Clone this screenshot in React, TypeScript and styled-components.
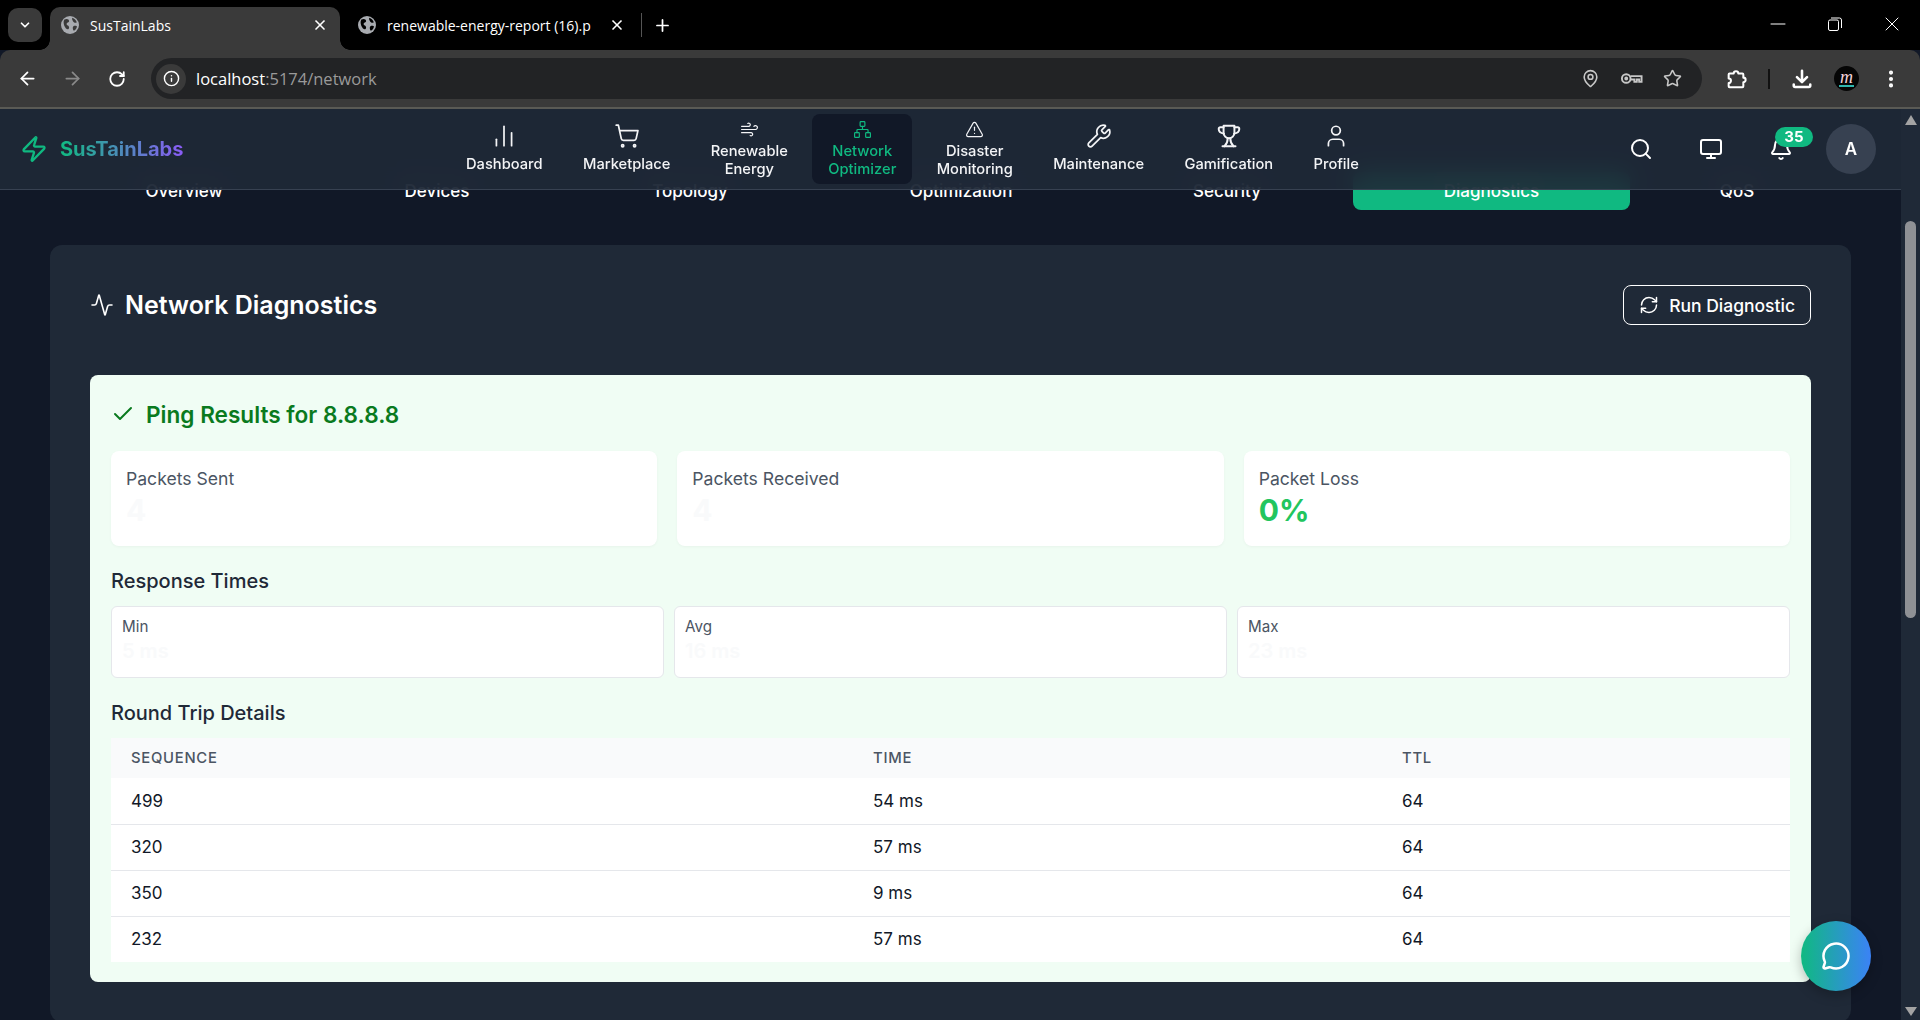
import React from "react";
import styled, { createGlobalStyle } from "styled-components";
import {
  Activity,
  ArrowLeft,
  ArrowRight,
  Bell,
  Check,
  ChartNoAxesColumn,
  ChevronDown,
  EllipsisVertical,
  Info,
  MapPin,
  MessageCircle,
  Minus,
  Monitor,
  Network,
  Plus,
  RefreshCw,
  RotateCw,
  Search,
  ShoppingCart,
  Star,
  TriangleAlert,
  User,
  Wind,
  Wrench,
  X,
  Zap,
} from "lucide-react";

const TrophyIcon = ({ size = 26 }: { size?: number; strokeWidth?: number }) => (
  <svg width={size} height={size} viewBox="0 0 24 24" fill="none" stroke="currentColor" strokeWidth="1.800" strokeLinecap="round" strokeLinejoin="round">
    <path d="M7 2.500h10v6.500a5 5 0 0 1-10 0z" />
    <path d="M7 4H4a1.500 1.500 0 0 0-1.500 1.500c0 2 2 3.800 4.800 4.300" />
    <path d="M17 4h3a1.500 1.500 0 0 1 1.500 1.500c0 2-2 3.800-4.800 4.300" />
    <path d="M10.800 14c0 3-1 5.500-3 7.500M13.200 14c0 3 1 5.500 3 7.500" />
    <path d="M6 21.500h12" />
  </svg>
);

const navItems = [
  { label: "Dashboard", icon: ChartNoAxesColumn },
  { label: "Marketplace", icon: ShoppingCart },
  { label: "Renewable Energy", icon: Wind, small: true },
  { label: "Network Optimizer", icon: Network, small: true, active: true },
  { label: "Disaster Monitoring", icon: TriangleAlert, small: true },
  { label: "Maintenance", icon: Wrench },
  { label: "Gamification", icon: TrophyIcon },
  { label: "Profile", icon: User },
];

const tabs = ["Overview", "Devices", "Topology", "Optimization", "Security", "Diagnostics", "QoS"];

const rows = [
  { seq: 499, time: "54 ms", ttl: 64 },
  { seq: 320, time: "57 ms", ttl: 64 },
  { seq: 350, time: "9 ms", ttl: 64 },
  { seq: 232, time: "57 ms", ttl: 64 },
];

const App = () => {
  return (
    <>
      <GlobalStyle />
      <Window>
        <TabStrip>
          <TabMenu>
            <ChevronDown size={14} strokeWidth={3} />
          </TabMenu>
          <ActiveTab>
            <Favicon cut="#3a3a3a" />
            <TabTitle>SusTainLabs</TabTitle>
            <X size={16} color="#fff" strokeWidth={2.5} />
          </ActiveTab>
          <BrowserTab>
            <Favicon cut="#000" />
            <TabTitle>renewable-energy-report (16).p</TabTitle>
            <X size={16} color="#fff" strokeWidth={2.5} />
          </BrowserTab>
          <TabDivider />
          <NewTab>
            <Plus size={19} strokeWidth={2.2} />
          </NewTab>
          <WindowControls>
            <WindowButton>
              <Minus size={24} strokeWidth={1} />
            </WindowButton>
            <WindowButton>
              <RestoreIcon />
            </WindowButton>
            <WindowButton>
              <X size={24} strokeWidth={1} />
            </WindowButton>
          </WindowControls>
        </TabStrip>
        <Toolbar>
          <ToolIcon>
            <ArrowLeft size={21} />
          </ToolIcon>
          <ToolIcon $muted>
            <ArrowRight size={21} />
          </ToolIcon>
          <ToolIcon>
            <RotateCw size={18} strokeWidth={2.4} />
          </ToolIcon>
          <AddressBar>
            <InfoBadge>
              <Info size={17} />
            </InfoBadge>
            <Url>
              localhost<UrlRest>:5174/network</UrlRest>
            </Url>
            <AddressIcons>
              <MapPin size={19} />
              <KeyIcon />
              <Star size={19} />
            </AddressIcons>
          </AddressBar>
          <ToolRight>
            <ExtensionIcon />
            <ToolSep />
            <DownloadIcon />
            <ProfileDot>
              <ProfileMark>m</ProfileMark>
            </ProfileDot>
            <EllipsisVertical size={22} color="#fff" strokeWidth={2.5} />
          </ToolRight>
        </Toolbar>
        <Viewport>
          <Page>
            <AppHeader>
              <Brand>
                <Zap size={28} color="#10b981" strokeWidth={2} />
                <BrandName>SusTainLabs</BrandName>
              </Brand>
              <Nav>
                {navItems.map(({ label, icon: Icon, small, active }) => (
                  <NavItem key={label} $active={active} $small={small}>
                    <Icon size={small ? 19 : 26} strokeWidth={small ? 1.5 : 1.6} />
                    <NavLabel>{label}</NavLabel>
                  </NavItem>
                ))}
              </Nav>
              <HeaderActions>
                <HeaderButton>
                  <Search size={24} />
                </HeaderButton>
                <HeaderButton>
                  <Monitor size={24} />
                </HeaderButton>
                <HeaderButton>
                  <Bell size={24} />
                  <Badge>35</Badge>
                </HeaderButton>
                <Avatar>A</Avatar>
              </HeaderActions>
            </AppHeader>
            <TabRow>
              {tabs.map((tab) => (
                <SectionTab key={tab} $active={tab === "Diagnostics"}>
                  {tab}
                </SectionTab>
              ))}
            </TabRow>
            <Card>
              <CardHead>
                <CardTitle>
                  <Activity size={24} strokeWidth={1.6} />
                  Network Diagnostics
                </CardTitle>
                <RunButton>
                  <RefreshCw size={20} strokeWidth={1.8} />
                  Run Diagnostic
                </RunButton>
              </CardHead>
              <ResultPanel>
                <PingTitle>
                  <Check size={24} strokeWidth={2} />
                  Ping Results for 8.8.8.8
                </PingTitle>
                <StatGrid>
                  <StatCard>
                    <StatLabel>Packets Sent</StatLabel>
                    <StatValue>4</StatValue>
                  </StatCard>
                  <StatCard>
                    <StatLabel>Packets Received</StatLabel>
                    <StatValue>4</StatValue>
                  </StatCard>
                  <StatCard>
                    <StatLabel>Packet Loss</StatLabel>
                    <StatValue $good>0%</StatValue>
                  </StatCard>
                </StatGrid>
                <SubTitle>Response Times</SubTitle>
                <TimeGrid>
                  <TimeCard>
                    <TimeLabel>Min</TimeLabel>
                    <TimeValue>5 ms</TimeValue>
                  </TimeCard>
                  <TimeCard>
                    <TimeLabel>Avg</TimeLabel>
                    <TimeValue>16 ms</TimeValue>
                  </TimeCard>
                  <TimeCard>
                    <TimeLabel>Max</TimeLabel>
                    <TimeValue>23 ms</TimeValue>
                  </TimeCard>
                </TimeGrid>
                <SubTitle>Round Trip Details</SubTitle>
                <Table>
                  <thead>
                    <tr>
                      <Th $width={742}>Sequence</Th>
                      <Th $width={529}>Time</Th>
                      <Th $width={408}>TTL</Th>
                    </tr>
                  </thead>
                  <tbody>
                    {rows.map((row) => (
                      <Row key={row.seq}>
                        <Td>{row.seq}</Td>
                        <Td>{row.time}</Td>
                        <Td>{row.ttl}</Td>
                      </Row>
                    ))}
                  </tbody>
                </Table>
              </ResultPanel>
            </Card>
            <ChatButton>
              <MessageCircle size={30} strokeWidth={2} />
            </ChatButton>
          </Page>
          <Scrollbar>
            <ScrollArrow />
            <ScrollThumb />
            <ScrollArrow $down />
          </Scrollbar>
        </Viewport>
      </Window>
    </>
  );
};

const Favicon = ({ cut }: { cut: string }) => (
  <svg width="18" height="18" viewBox="0 0 16 16" style={{ flex: "none" }}>
    <circle cx="8" cy="8" r="8" fill="#a8abb0" />
    <path
      fill={cut}
      d="M3 3.2c2-1.2 4.2-.4 4.2 1.2S5 5.6 5 7.2s2.2 1 2.2 3-1.8 2-3 .6S1.4 5.8 3 3.2zM10 1.6c2 .6 3.4 2 4 4-1 1-2.6.2-3.2-.8S9.6 2.800 10 1.600zM11 9c1.500-.6 3-.2 3.200.4-.2 1.400-1.200 3-2.700 3.800-1-1-1.500-3.200-.5-4.200z"
    />
  </svg>
);

const RestoreIcon = () => (
  <svg width="14" height="14" viewBox="0 0 14 14" fill="none" stroke="#fff" strokeWidth="1">
    <rect x="0.5" y="3" width="10" height="10.500" rx="1.500" />
    <path d="M3 1h8.500a2 2 0 0 1 2 2v8" />
  </svg>
);

const KeyIcon = () => (
  <svg width="23" height="23" viewBox="0 0 24 24" fill="none" stroke="currentColor" strokeWidth="2">
    <circle cx="6.500" cy="12" r="4.500" />
    <circle cx="6.500" cy="12" r="1" fill="currentColor" />
    <path d="M11 9.500h11.500v6h-2.500v-2.500h-2.500v2.500h-2.500v-2.500H11" />
  </svg>
);

const ExtensionIcon = () => (
  <svg width="22" height="22" viewBox="0 0 24 24" fill="none" stroke="#fff" strokeWidth="2.200" strokeLinejoin="round">
    <path d="M5 6h4.500a2.500 2.500 0 0 1 5 0H19a1 1 0 0 1 1 1v3.500a2.500 2.500 0 0 1 0 5V20a1 1 0 0 1-1 1H5a1 1 0 0 1-1-1v-3.500a2.500 2.500 0 0 0 0-5V7a1 1 0 0 1 1-1z" />
  </svg>
);

const DownloadIcon = () => (
  <svg width="22" height="22" viewBox="0 0 24 24" fill="none" stroke="#fff" strokeWidth="2.800" strokeLinecap="round" strokeLinejoin="round">
    <path d="M12 3v12M6.500 10l5.500 5.500 5.500-5.500" />
    <path d="M3 18v1.200a1.500 1.500 0 0 0 1.500 1.500h15a1.500 1.500 0 0 0 1.500-1.500V18" />
  </svg>
);

const GlobalStyle = createGlobalStyle`
  html, body {
    margin: 0;
    height: 100%;
    overflow: hidden;
    background: #111827;
    font-family: Inter, "Liberation Sans", sans-serif;
  }
  * {
    box-sizing: border-box;
  }
`;

const Window = styled.div`
  width: 1920px;
  height: 1020px;
  display: flex;
  flex-direction: column;
  overflow: hidden;
`;

const TabStrip = styled.div`
  height: 50px;
  flex: none;
  background: #000;
  display: flex;
  align-items: flex-end;
  padding-left: 8px;
  color: #fff;
  font-family: "Open Sans", "Liberation Sans", sans-serif;
`;

const TabMenu = styled.div`
  width: 34px;
  height: 34px;
  margin: 0 8px 8px 0;
  border-radius: 10px;
  background: #3a3a3a;
  display: flex;
  align-items: center;
  justify-content: center;
`;

const BrowserTab = styled.div`
  width: 297px;
  height: 43px;
  padding: 0 12px 7px 18px;
  display: flex;
  align-items: center;
  gap: 11px;
`;

const ActiveTab = styled(BrowserTab)`
  position: relative;
  width: 290px;
  padding-left: 11px;
  border-radius: 10px 10px 0 0;
  background: #3a3a3a;

  &::before,
  &::after {
    content: "";
    position: absolute;
    bottom: 0;
    width: 10px;
    height: 10px;
  }
  &::before {
    left: -10px;
    background: radial-gradient(circle at 0 0, transparent 9.500px, #3a3a3a 10px);
  }
  &::after {
    right: -10px;
    background: radial-gradient(circle at 100% 0, transparent 9.500px, #3a3a3a 10px);
  }
`;

const TabTitle = styled.span`
  flex: 1;
  font-size: 14px;
  white-space: nowrap;
  overflow: hidden;
`;

const TabDivider = styled.div`
  width: 1px;
  height: 24px;
  margin: 0 0 13px 4px;
  background: #555;
`;

const NewTab = styled.div`
  width: 40px;
  height: 43px;
  padding-bottom: 7px;
  display: flex;
  align-items: center;
  justify-content: center;
`;

const WindowControls = styled.div`
  margin-left: auto;
  align-self: flex-start;
  height: 48px;
  display: flex;
`;

const WindowButton = styled.div`
  width: 57px;
  display: flex;
  align-items: center;
  justify-content: center;
`;

const Toolbar = styled.div`
  height: 59px;
  flex: none;
  background: #3a3a3a;
  border-radius: 10px 10px 0 0;
  border-bottom: 2px solid #5a5a55;
  display: flex;
  align-items: center;
  padding-left: 9px;
`;

const ToolIcon = styled.div<{ $muted?: boolean }>`
  width: 36px;
  height: 36px;
  margin-right: 9px;
  display: flex;
  align-items: center;
  justify-content: center;
  color: ${(p) => (p.$muted ? "#8a8a8a" : "#fff")};
`;

const AddressBar = styled.div`
  width: 1551px;
  height: 41px;
  margin-left: 7px;
  border-radius: 21px;
  background: #222325;
  display: flex;
  align-items: center;
  padding: 0 20px 0 5px;
`;

const InfoBadge = styled.div`
  width: 30px;
  height: 30px;
  border-radius: 50%;
  background: #3a3a3a;
  color: #fff;
  display: flex;
  align-items: center;
  justify-content: center;
`;

const Url = styled.div`
  margin-left: 10px;
  font-family: "Open Sans", "Liberation Sans", sans-serif;
  font-size: 16.500px;
  color: #fff;
`;

const UrlRest = styled.span`
  color: #9a9a9a;
`;

const AddressIcons = styled.div`
  margin-left: auto;
  display: flex;
  align-items: center;
  gap: 20px;
  color: #c7c7c7;
`;

const ToolRight = styled.div`
  display: flex;
  align-items: center;
  gap: 21px;
  padding-left: 23px;
`;

const ToolSep = styled.div`
  width: 2px;
  height: 20px;
  background: #111;
`;

const ProfileDot = styled.div`
  width: 25px;
  height: 25px;
  border-radius: 50%;
  background: #050505;
  display: flex;
  align-items: center;
  justify-content: center;
`;

const ProfileMark = styled.span`
  color: #f6d5dc;
  font: italic 400 18px/13px "Liberation Serif", serif;
  border-bottom: 2px solid #2fb5ad;
  padding: 0 1px 1px;
`;

const Viewport = styled.div`
  flex: 1;
  min-height: 0;
  display: flex;
`;

const Page = styled.main`
  position: relative;
  flex: 1;
  min-width: 0;
  overflow: hidden;
  background: #111827;
  padding: 63px 50px 0;
`;

const AppHeader = styled.header`
  position: absolute;
  z-index: 2;
  top: 0;
  left: 0;
  right: 0;
  height: 81px;
  padding: 0 25px 0 20px;
  display: flex;
  align-items: center;
  background: rgba(31, 41, 55, 0.9);
  backdrop-filter: blur(12px);
  border-bottom: 1px solid #374151;
`;

const Brand = styled.div`
  display: flex;
  align-items: center;
  gap: 12px;
  width: 430px;
`;

const BrandName = styled.span`
  font-size: 20px;
  font-weight: 700;
  background: linear-gradient(90deg, #10b981, #8b5cf6);
  -webkit-background-clip: text;
  background-clip: text;
  color: transparent;
`;

const Nav = styled.nav`
  display: flex;
  align-items: center;
  gap: 8.400px;
`;

const NavItem = styled.a<{ $active?: boolean; $small?: boolean }>`
  padding: ${(p) => (p.$small ? "6px 16px" : "6px 16px 8px")};
  border-radius: 8px;
  display: flex;
  flex-direction: column;
  align-items: center;
  gap: ${(p) => (p.$small ? "3px" : "6px")};
  text-align: center;
  color: ${(p) => (p.$active ? "#10b981" : "#f3f4f6")};
  background: ${(p) => (p.$active ? "#111827" : "transparent")};
`;

const NavLabel = styled.span`
  width: min-content;
  font-size: 14.700px;
  font-weight: 500;
  line-height: 18px;
`;

const HeaderActions = styled.div`
  margin-left: auto;
  display: flex;
  align-items: center;
`;

const HeaderButton = styled.button`
  position: relative;
  width: 70px;
  height: 48px;
  padding: 0;
  border: 0;
  background: none;
  color: #fff;
  font-family: inherit;
  display: flex;
  align-items: center;
  justify-content: center;
`;

const Badge = styled.span`
  position: absolute;
  top: 2px;
  left: 29px;
  width: 38px;
  height: 20px;
  border-radius: 10px;
  background: #10b981;
  color: #fff;
  font-size: 15px;
  font-weight: 700;
  line-height: 20px;
  text-align: center;
`;

const Avatar = styled.div`
  width: 50px;
  height: 50px;
  margin-left: 10px;
  border-radius: 50%;
  background: #374151;
  color: #fff;
  font-size: 17px;
  font-weight: 600;
  display: flex;
  align-items: center;
  justify-content: center;
`;

const TabRow = styled.div`
  display: grid;
  grid-template-columns: 246px 244px 246px 280px 236px 277px 198px;
  gap: 8px;
  padding-left: 11px;
  margin-bottom: 35px;
`;

const SectionTab = styled.div<{ $active?: boolean }>`
  height: 38px;
  border-radius: 8px;
  color: #fff;
  font-size: 17px;
  font-weight: 500;
  line-height: 38px;
  text-align: center;
  background: ${(p) => (p.$active ? "#10b981" : "transparent")};
`;

const Card = styled.section`
  background: #1f2937;
  border-radius: 12px;
  padding: 40px;
`;

const CardHead = styled.div`
  display: flex;
  align-items: center;
  justify-content: space-between;
  margin-bottom: 50px;
`;

const CardTitle = styled.h2`
  margin: 0;
  display: flex;
  align-items: center;
  gap: 11px;
  color: #fff;
  font-size: 25px;
  font-weight: 600;
`;

const RunButton = styled.button`
  height: 40px;
  padding: 0 15px;
  border: 1px solid #fff;
  border-radius: 8px;
  background: transparent;
  color: #fff;
  font-family: inherit;
  font-size: 17.500px;
  font-weight: 500;
  display: flex;
  align-items: center;
  gap: 10px;
`;

const ResultPanel = styled.div`
  background: #f0fdf4;
  border-radius: 8px;
  padding: 21px 21px 20px;
`;

const PingTitle = styled.h3`
  margin: 0 0 19px;
  height: 36px;
  display: flex;
  align-items: center;
  gap: 11px;
  color: #0a7a1e;
  font-size: 22.600px;
  font-weight: 600;
`;

const StatGrid = styled.div`
  display: grid;
  grid-template-columns: repeat(3, 1fr);
  gap: 20px;
  margin-bottom: 22px;
`;

const StatCard = styled.div`
  padding: 15px;
  height: 95px;
  border-radius: 8px;
  background: #fff;
  box-shadow: 0 1px 3px rgba(0, 0, 0, 0.04);
`;

const StatLabel = styled.div`
  font-size: 17.600px;
  line-height: 26px;
  color: #4b5563;
`;

const StatValue = styled.div<{ $good?: boolean }>`
  font-size: 30px;
  font-weight: 700;
  line-height: 36px;
  color: ${(p) => (p.$good ? "#22c55e" : "#f9fafb")};
`;

const SubTitle = styled.h4`
  margin: 0 0 11px;
  font-size: 20px;
  font-weight: 500;
  line-height: 27px;
  color: #1f2937;
`;

const TimeGrid = styled.div`
  display: grid;
  grid-template-columns: repeat(3, 1fr);
  gap: 10px;
  margin-bottom: 22px;
`;

const TimeCard = styled.div`
  height: 72px;
  padding: 10px;
  border: 1px solid #e5e7eb;
  border-radius: 6px;
  background: #fff;
`;

const TimeLabel = styled.div`
  font-size: 15.200px;
  line-height: 20px;
  color: #4b5563;
`;

const TimeValue = styled.div`
  font-size: 20px;
  font-weight: 600;
  line-height: 29px;
  color: #f9fafb;
`;

const Table = styled.table`
  width: 100%;
  table-layout: fixed;
  border-collapse: collapse;
  background: #fff;
`;

const Th = styled.th<{ $width: number }>`
  width: ${(p) => p.$width}px;
  height: 40px;
  padding: 0 20px;
  background: #f9fafb;
  color: #4b5563;
  font-size: 14.800px;
  font-weight: 500;
  letter-spacing: 0.740px;
  text-align: left;
  text-transform: uppercase;
`;

const Row = styled.tr`
  border-top: 1px solid #e5e7eb;

  &:first-child {
    border-top: 0;
  }
`;

const Td = styled.td`
  height: 46px;
  padding: 0 20px;
  font-size: 17px;
  color: #111827;
`;

const ChatButton = styled.button`
  position: absolute;
  z-index: 3;
  top: 812px;
  left: 1801px;
  width: 70px;
  height: 70px;
  padding: 0;
  border: 0;
  border-radius: 50%;
  background: linear-gradient(90deg, #10b981, #3b82f6);
  color: #fff;
  box-shadow: 0 4px 12px rgba(0, 0, 0, 0.25);
  display: flex;
  align-items: center;
  justify-content: center;
`;

const Scrollbar = styled.div`
  width: 19px;
  flex: none;
  background: #1f2937;
  display: flex;
  flex-direction: column;
  align-items: center;
  padding: 6px 0 4px;
`;

const ScrollArrow = styled.div<{ $down?: boolean }>`
  width: 0;
  height: 0;
  border-left: 6.500px solid transparent;
  border-right: 6.500px solid transparent;
  ${(p) =>
    p.$down ? "border-top: 9px solid #a3a3a3; margin-top: auto;" : "border-bottom: 10px solid #a3a3a3;"}
`;

const ScrollThumb = styled.div`
  width: 11px;
  height: 397px;
  margin-top: 96px;
  border-radius: 6px;
  background: #8f9195;
`;

export default App;
